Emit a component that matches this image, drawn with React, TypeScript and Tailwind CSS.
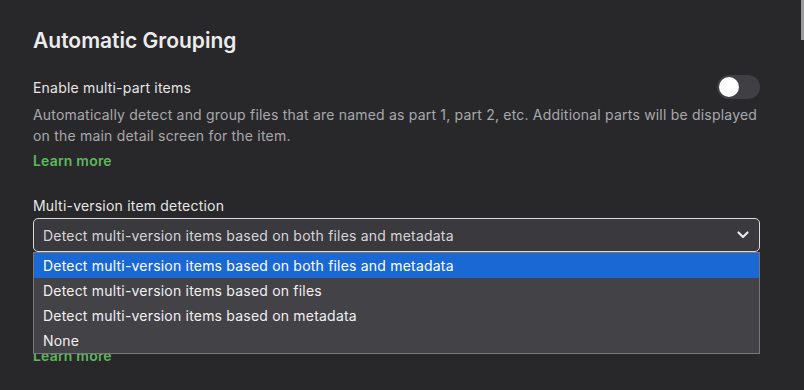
import React from "react";

const options = [
  "Detect multi-version items based on both files and metadata",
  "Detect multi-version items based on files",
  "Detect multi-version items based on metadata",
  "None",
];

export default function App() {
  return (
    <div
      className="relative h-[390px] w-[804px] overflow-hidden bg-[#28282a] text-[14px] tracking-[0.2px]"
      style={{ fontFamily: "Inter, 'Noto Sans', sans-serif" }}
    >
      <div className="absolute right-0 top-0 h-[40px] w-[3px] bg-[#9a9a9c]" />
      <div className="w-[760px] pl-[33px] pt-[27px]">
        <h1 className="text-[21px] font-semibold leading-[28px] tracking-normal text-[#ececec]">Automatic Grouping</h1>

        <div className="mt-[20px] flex items-center justify-between">
          <div className="leading-[21px] text-[#e6e6e6]">Enable multi-part items</div>
          <div className="flex h-[24px] w-[43px] items-center rounded-full bg-[#3f3f44] px-[2px]">
            <div className="h-[20px] w-[20px] rounded-full bg-white" />
          </div>
        </div>
        <p className="mt-[5px] leading-[21px] text-[#a9a9ab]">
          Automatically detect and group files that are named as part 1, part 2, etc. Additional parts will be displayed
          on the main detail screen for the item.
        </p>
        <div className="mt-[4px] font-semibold leading-[21px] text-[#5cb85c]">Learn more</div>

        <div className="mt-[24px] leading-[21px] text-[#e6e6e6]">Multi-version item detection</div>
        <div className="relative mt-[2px]">
          <div className="flex h-[34px] items-center justify-between rounded-[5px] border border-[#d9d9d9] bg-[#3a393e] pl-[9px] pr-[9px] text-[#d6d6d8]">
            <span>Detect multi-version items based on both files and metadata</span>
            <svg width="14" height="14" viewBox="0 0 14 14" fill="none">
              <path d="M2.5 4.5 L7 9 L11.5 4.5" stroke="#e8e8e8" strokeWidth="2.2" strokeLinecap="round" strokeLinejoin="round" />
            </svg>
          </div>
          <div className="absolute left-0 right-0 top-[34px] z-10 border border-[#77777a] bg-[#434247]">
            {options.map((o, i) => (
              <div
                key={o}
                className={
                  i === 0
                    ? "flex h-[25px] items-center bg-[#1a68d4] pl-[9px] text-white"
                    : "flex h-[25px] items-center pl-[9px] text-[#f0f0f0]"
                }
              >
                {o}
              </div>
            ))}
          </div>
          <p className="mt-[47px] leading-[21px] text-[#a9a9ab]">
            Automatically detect and group items that have multiple versions available, such as different resolutions
            or editions of the same item.
          </p>
          <div className="mt-[4px] font-semibold leading-[21px] text-[#5cb85c]">Learn more</div>
        </div>
      </div>
    </div>
  );
}
